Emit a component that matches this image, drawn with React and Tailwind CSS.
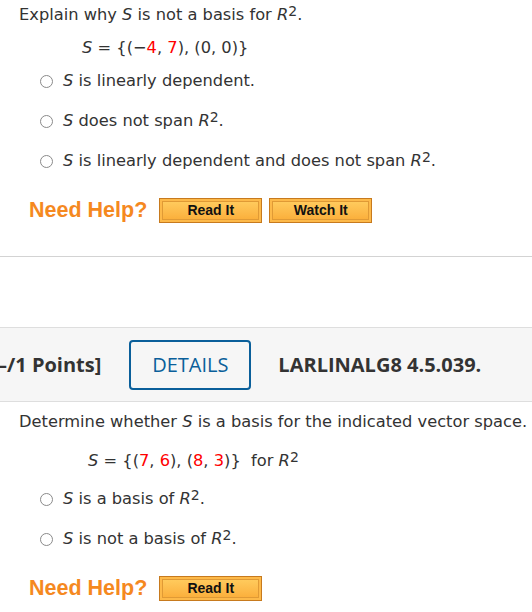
const V = { fontFamily: '"DejaVu Sans", Verdana, sans-serif' }
const A = { fontFamily: '"Liberation Sans", Arial, sans-serif' }

function Radio({ children }) {
  return (
    <div className="flex items-center h-10 pl-[40px]">
      <span className="w-[13px] h-[13px] rounded-full border border-[#8a8a8a] bg-white shrink-0" />
      <span className="ml-[10px]">{children}</span>
    </div>
  )
}

function R2() {
  return (
    <>
      <i>R</i>
      <span className="relative -top-[4px] text-[14px] leading-none">2</span>
    </>
  )
}

function HelpBtn({ label }) {
  return (
    <button className="h-[25px] w-[103px] border border-[#c77a1e] bg-[#fdb949] p-[2px]">
      <span
        className="flex items-center justify-center h-full w-full border border-[#e09a35] bg-gradient-to-b from-[#ffca5c] to-[#fbb03c] text-[14px] font-bold text-[#111]"
        style={A}
      >
        {label}
      </span>
    </button>
  )
}

function NeedHelp({ buttons }) {
  return (
    <div className="flex items-center h-[25px] gap-[7px] pl-[29px]">
      <span className="text-[21.5px] leading-none font-bold text-[#f5891f] mr-[5px]" style={A}>
        Need Help?
      </span>
      {buttons.map(b => <HelpBtn key={b} label={b} />)}
    </div>
  )
}

export default function App() {
  return (
    <div className="w-[532px] h-[612px] overflow-hidden bg-white text-[16.25px] text-[#333]" style={V}>
      {/* first question */}
      <div className="pl-[19px] h-[30px] leading-[30px]">
        Explain why <i>S</i> is not a basis for <R2 />.
      </div>
      <div className="pl-[82px] h-[31px] leading-[36px]">
        <i>S</i> = {'{'}(−<span className="text-[#f00]">4</span>, <span className="text-[#f00]">7</span>), (0, 0){'}'}
      </div>
      <Radio><i>S</i> is linearly dependent.</Radio>
      <Radio><i>S</i> does not span <R2 />.</Radio>
      <Radio><i>S</i> is linearly dependent and does not span <R2 />.</Radio>
      <div className="mt-[17px]">
        <NeedHelp buttons={['Read It', 'Watch It']} />
      </div>

      <div className="mt-[33px] border-t border-[#d3d3d3]" />

      {/* next question header */}
      <div
        className="mt-[70px] h-[75px] bg-[#f6f6f6] border-t border-b border-[#dedede] flex items-center"
        style={{ fontFamily: '"Open Sans", sans-serif' }}
      >
        <span className="-ml-[3px] text-[20px] font-bold text-[#333] whitespace-nowrap">–/1 Points]</span>
        <span className="ml-[28px] h-[50px] w-[122px] flex items-center justify-center rounded-[4px] border-2 border-[#0a5f9a] text-[20px] font-medium text-[#0a5f9a]">
          DETAILS
        </span>
        <span className="ml-[27px] text-[20px] font-bold text-[#333]">LARLINALG8 4.5.039.</span>
      </div>

      <div className="pl-[19px] mt-[8px] h-[24px] leading-[24px] whitespace-nowrap">
        Determine whether <i>S</i> is a basis for the indicated vector space.
      </div>
      <div className="pl-[88px] mt-[13px] h-[28px] leading-[28px]">
        <i>S</i> = {'{'}(<span className="text-[#f00]">7</span>, <span className="text-[#f00]">6</span>), (<span className="text-[#f00]">8</span>, <span className="text-[#f00]">3</span>){'}'} &nbsp;for <R2 />
      </div>
      <div className="mt-[4px]">
        <Radio><i>S</i> is a basis of <R2 />.</Radio>
        <Radio><i>S</i> is not a basis of <R2 />.</Radio>
      </div>
      <div className="mt-[17px]">
        <NeedHelp buttons={['Read It']} />
      </div>
    </div>
  )
}
